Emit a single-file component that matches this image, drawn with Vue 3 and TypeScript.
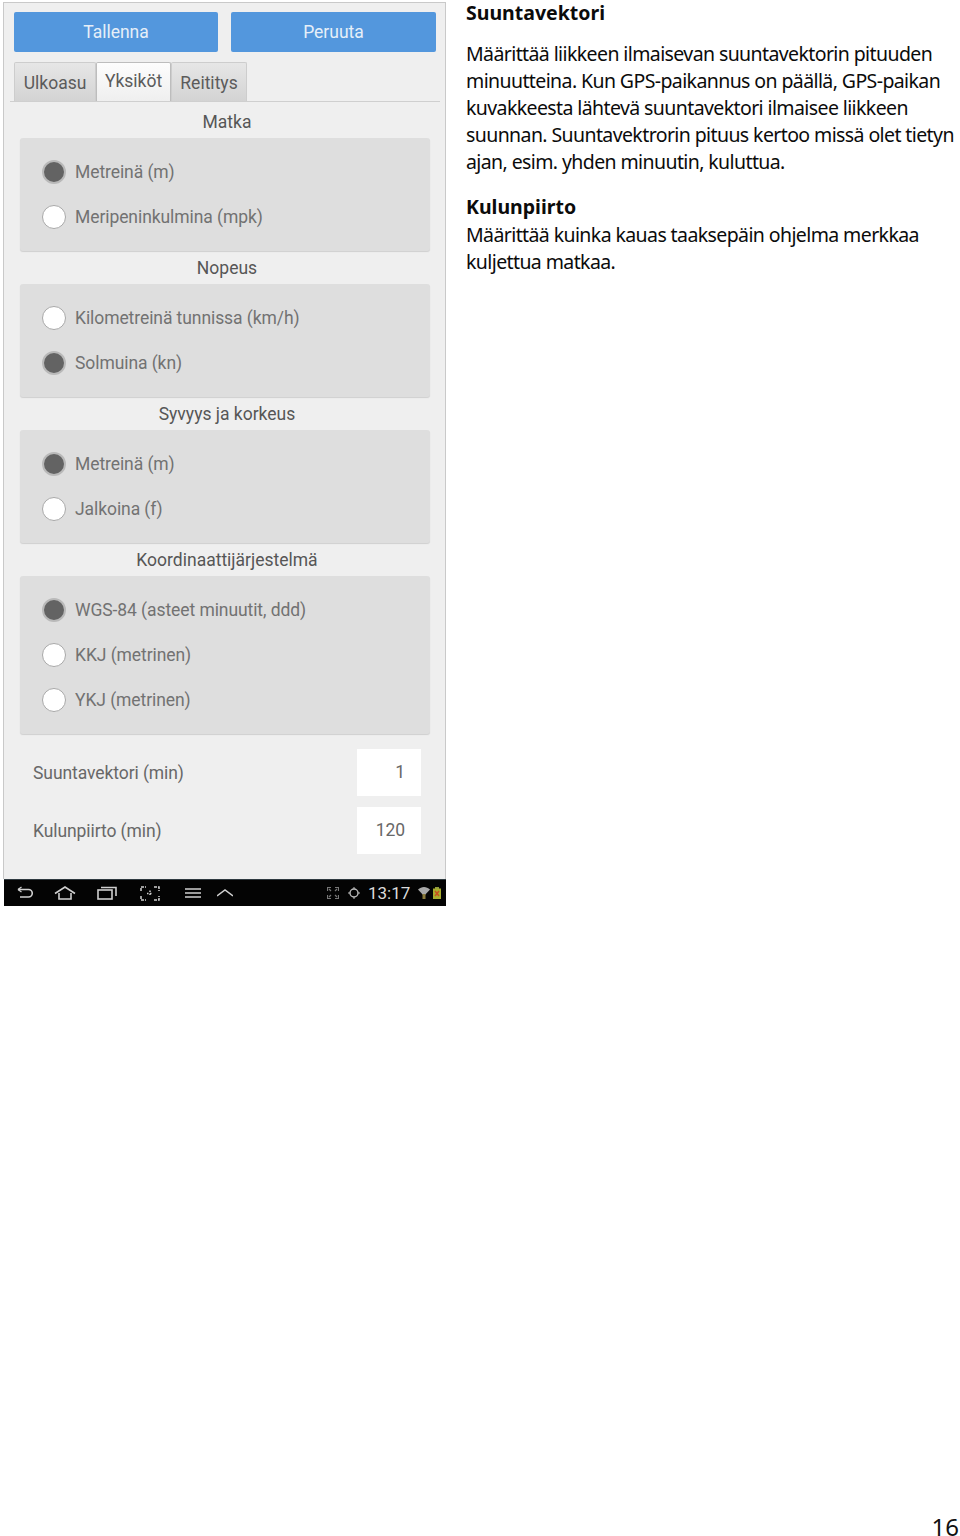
<template>
  <div class="page">
    <div class="columns">
      <div class="phone">
        <div class="screen">
          <div class="actions">
            <button class="action">Tallenna</button>
            <button class="action">Peruuta</button>
          </div>
          <div class="tabs">
            <div v-for="t in tabs" :key="t" class="tab" :class="{ active: t === 'Yksiköt' }">{{ t }}</div>
          </div>
          <div class="groups">
            <section v-for="g in groups" :key="g.title" class="group">
              <h3 class="group-title">{{ g.title }}</h3>
              <div class="panel">
                <div v-for="o in g.options" :key="o.label" class="option">
                  <span class="radio" :class="{ on: o.on }"></span>
                  <span>{{ o.label }}</span>
                </div>
              </div>
            </section>
          </div>
          <div class="fields">
            <div v-for="f in fields" :key="f.label" class="field">
              <span>{{ f.label }}</span>
              <span class="input">{{ f.value }}</span>
            </div>
          </div>
        </div>
        <div class="navbar">
          <div class="nav-left">
            <svg class="ic back" width="16" height="14" viewBox="0 0 16 14" fill="none" stroke="#cfcfcf" stroke-width="1.6">
              <path d="M1 3.5h10.5a3.7 3.7 0 0 1 0 7.5H3" />
              <path d="M1 3.5 4.5 1M1 3.5 4.5 6" stroke-width="1.3" />
            </svg>
            <svg class="ic home" width="22" height="14" viewBox="0 0 22 14" fill="none" stroke="#cfcfcf" stroke-width="1.6">
              <path d="M1 7.5 11 1l10 6.5" />
              <path d="M5 7v6h12V7" />
            </svg>
            <svg class="ic recent" width="20" height="14" viewBox="0 0 20 14" fill="none" stroke="#cfcfcf" stroke-width="1.6">
              <rect x="1" y="4" width="14" height="9" />
              <path d="M4 1.500h15V10" />
            </svg>
            <svg class="ic shot" width="20" height="15" viewBox="0 0 20 15" fill="none" stroke="#cfcfcf" stroke-width="1.5">
              <path d="M1 5V1h5M14 1h5v4M1 10v4h5M14 14h5v-4" stroke-dasharray="3 1" />
              <path d="M7 7.500h6M10 4.500v6" stroke-dasharray="1.500 1.500" />
            </svg>
            <svg class="ic menu" width="16" height="12" viewBox="0 0 16 12" fill="none" stroke="#cfcfcf" stroke-width="1.700">
              <path d="M0 2h16M0 6h16M0 10h16" />
            </svg>
            <svg class="ic up" width="16" height="8" viewBox="0 0 16 8" fill="none" stroke="#cfcfcf" stroke-width="1.500">
              <path d="M0 7 8 1l8 6" />
            </svg>
          </div>
          <div class="nav-right">
            <svg class="st full" width="12" height="12" viewBox="0 0 12 12" fill="none" stroke="#777" stroke-width="1.200">
              <path d="M0.500 4V.5H4M8 .5h3.500V4M.5 8v3.500H4M8 11.500h3.500V8" />
              <path d="M2 2l2 2M10 2 8 4M2 10l2-2M10 10 8 8" />
            </svg>
            <svg class="st gps" width="12" height="12" viewBox="0 0 12 12" fill="none" stroke="#bbb" stroke-width="1.400">
              <circle cx="6" cy="6" r="4" />
              <path d="M6 0v2M6 10v2M0 6h2M10 6h2" stroke-width="1" />
            </svg>
            <span class="clock">13:17</span>
            <svg class="st wifi" width="12" height="14" viewBox="0 0 12 14">
              <path d="M0 3.500C3.500 0 8.500 0 12 3.500L6 10z" fill="#a9a9a9" />
              <rect x="4.500" y="8" width="3" height="5" fill="#8a7a3a" />
            </svg>
            <svg class="st batt" width="8" height="12" viewBox="0 0 8 12">
              <rect x="2" y="0" width="4" height="2" fill="#8f9a3a" />
              <rect x="0" y="1.500" width="8" height="10.500" fill="#a8ad2e" />
              <path d="M2 4l4 5M6 4 2 9" stroke="#c8501e" stroke-width="1.500" />
            </svg>
          </div>
        </div>
      </div>

      <div class="manual">
        <h2 class="heading first">Suuntavektori</h2>
        <p class="para">Määrittää liikkeen ilmaisevan suuntavektorin pituuden<br />minuutteina. Kun GPS-paikannus on päällä, GPS-paikan<br />kuvakkeesta lähtevä suuntavektori ilmaisee liikkeen<br />suunnan. Suuntavektrorin pituus kertoo missä olet tietyn<br />ajan, esim. yhden minuutin, kuluttua.</p>
        <h2 class="heading">Kulunpiirto</h2>
        <p class="para">Määrittää kuinka kauas taaksepäin ohjelma merkkaa<br />kuljettua matkaa.</p>
      </div>
    </div>
    <div class="page-no">16</div>
  </div>
</template>

<script setup lang="ts">
interface Option { label: string; on?: boolean }
interface Group { title: string; options: Option[] }

const tabs = ['Ulkoasu', 'Yksiköt', 'Reititys']

const groups: Group[] = [
  { title: 'Matka', options: [{ label: 'Metreinä (m)', on: true }, { label: 'Meripeninkulmina (mpk)' }] },
  { title: 'Nopeus', options: [{ label: 'Kilometreinä tunnissa (km/h)' }, { label: 'Solmuina (kn)', on: true }] },
  { title: 'Syvyys ja korkeus', options: [{ label: 'Metreinä (m)', on: true }, { label: 'Jalkoina (f)' }] },
  {
    title: 'Koordinaattijärjestelmä',
    options: [{ label: 'WGS-84 (asteet minuutit, ddd)', on: true }, { label: 'KKJ (metrinen)' }, { label: 'YKJ (metrinen)' }],
  },
]

const fields = [
  { label: 'Suuntavektori (min)', value: '1' },
  { label: 'Kulunpiirto (min)', value: '120' },
]
</script>

<style>
html, body { margin: 0; background: #fff; }
</style>

<style scoped>
.page {
  width: 960px;
  height: 1536px;
  display: flex;
  flex-direction: column;
  box-sizing: border-box;
  padding: 2px 1px 0 3px;
  overflow: hidden;
}
.columns { display: flex; gap: 20px; flex: 1; align-items: flex-start; }

/* screenshot on the left */
.phone { width: 443px; flex: none; font-family: Roboto, sans-serif; color: #5b5b5b; }
.screen {
  height: 877px;
  box-sizing: border-box;
  background: #efefef;
  border: 1px solid #c9c9c9;
  border-bottom: none;
  padding: 9px 9px 0 6px;
}
.actions { display: flex; gap: 13px; padding-left: 4px; }
.action {
  flex: 1;
  height: 40px;
  border: none;
  border-radius: 2px;
  background: #5397dd;
  color: #e6eff8;
  font: 17.500px Roboto, sans-serif;
  padding: 0;
}
.action:first-child { flex: 0 0 204px; }
.tabs {
  display: flex;
  margin-top: 10px;
  padding-left: 4px;
  height: 39px;
  border-bottom: 1px solid #cfcfcf;
  margin-right: -4px;
}
.tab {
  box-sizing: border-box;
  height: 39px;
  padding-top: 10px;
  text-align: center;
  font-size: 17.500px;
  background: linear-gradient(#e6e6e6, #d3d3d3);
  border: 1px solid #cdcdcd;
  border-bottom: none;
  border-radius: 2px 2px 0 0;
  width: 82px;
}
.tab:nth-child(2) { width: 75px; }
.tab:nth-child(3) { width: 76px; }
.tab.active {
  background: linear-gradient(#fdfdfd, #efefef);
  border-color: #bdbdbd;
  padding-top: 8px;
}
.groups { padding: 0 6px 0 10px; }
.group:first-child { padding-top: 3px; }
.group-title {
  margin: 0;
  height: 33px;
  line-height: 35px;
  font-size: 17.500px;
  font-weight: 400;
  text-align: center;
  color: #565656;
  padding-left: 4px;
}
.panel {
  background: #dedede;
  border-radius: 3px;
  padding: 11px 0 12px;
  box-shadow: 0 1px 1px #cfcfcf;
}
.option {
  height: 45px;
  display: flex;
  align-items: center;
  gap: 9px;
  padding-left: 22px;
  font-size: 17.500px;
  letter-spacing: -0.08px;
  color: #727272;
}
.radio {
  width: 24px;
  height: 24px;
  box-sizing: border-box;
  border-radius: 50%;
  background: #fff;
  border: 1px solid #a8a8a8;
  flex: none;
}
.radio.on { background: #636363; border: 2px solid #b9b9b9; }
.fields { padding: 15px 15px 0 23px; display: flex; flex-direction: column; gap: 11px; }
.field {
  display: flex;
  justify-content: space-between;
  align-items: center;
  font-size: 17.500px;
  letter-spacing: -0.08px;
  color: #686868;
}
.input {
  width: 64px;
  height: 47px;
  line-height: 47px;
  box-sizing: border-box;
  padding-right: 16px;
  background: #fff;
  text-align: right;
}
.navbar {
  height: 27px;
  margin-left: 1px;
  background: #040404;
  border-top: 1px solid #2f3a40;
  box-sizing: border-box;
  display: flex;
  align-items: center;
  justify-content: space-between;
  padding: 0 5px 0 13px;
}
.nav-left, .nav-right { display: flex; align-items: center; }
.ic.home { margin-left: 21px; }
.ic.recent { margin-left: 21px; }
.ic.shot { margin-left: 23px; }
.ic.menu { margin-left: 25px; }
.ic.up { margin-left: 16px; }
.gps { margin-left: 9px; }
.clock { margin-left: 8px; width: 50px; font-size: 17px; color: #dcdcdc; }
.batt { margin-left: 3px; }

/* manual text on the right */
.manual {
  font-family: "Noto Sans", sans-serif;
  color: #0b0b0b;
  white-space: nowrap;
}
.heading {
  margin: 18px 0 0;
  font-size: 19.500px;
  line-height: 28px;
  font-weight: 700;
}
.heading.first { margin: 0 0 17px; line-height: 21px; }
.para {
  margin: 0;
  font-size: 19.500px;
  line-height: 27px;
  letter-spacing: -0.6px;
}
.page-no {
  align-self: flex-end;
  font-family: "Noto Sans", sans-serif;
  font-size: 24px;
  line-height: 18px;
  color: #111;
}
</style>
